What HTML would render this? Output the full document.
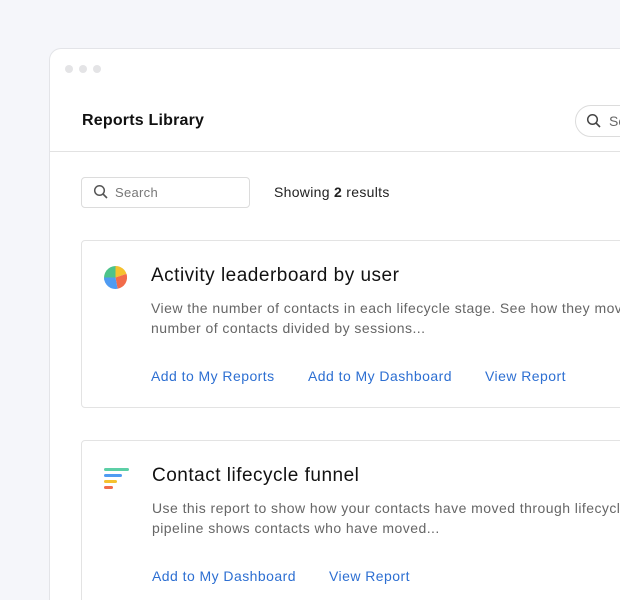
<!DOCTYPE html>
<html style="overflow:hidden;width:620px;height:600px"><head><style>
body{margin:0;width:620px;height:600px;background:#f5f6fa;overflow:hidden;font-family:"Liberation Sans",sans-serif;position:relative}
.win{position:absolute;left:49px;top:48px;width:571px;height:552px;background:#fff;border:1px solid #e3e4e8;border-right:none;border-bottom:none;border-radius:12px 0 0 0;overflow:hidden}
.dot{position:absolute;top:16px;width:8px;height:8px;border-radius:50%;background:#e4e4e6}
.title{position:absolute;left:32px;top:63px;font-size:16px;font-weight:bold;color:#111;letter-spacing:0.2px}
.hsearch{position:absolute;left:525px;top:56px;width:80px;height:30px;border:1px solid #dcdcdc;border-radius:16px}
.div{position:absolute;left:0;right:0;top:102px;border-top:1px solid #e2e2e2}
.search{position:absolute;left:31px;top:128px;width:167px;height:29px;border:1px solid #dcdcdc;border-radius:4px;font-size:13px;color:#777;letter-spacing:0.3px}
.show{position:absolute;left:224px;top:135px;font-size:14px;color:#222;letter-spacing:0.3px}
.card{position:absolute;left:31px;width:600px;border:1px solid #e3e3e3;border-radius:4px;background:#fff}
.ct{position:absolute;left:69px;font-size:19px;color:#111;letter-spacing:0.5px}
.cd{position:absolute;left:69px;font-size:14px;color:#666;line-height:20px;white-space:nowrap;letter-spacing:0.45px}
.lk{position:absolute;font-size:14px;color:#2d6fd2;letter-spacing:0.45px}
</style></head><body>
<div class="win">
<div class="dot" style="left:15px"></div><div class="dot" style="left:29px"></div><div class="dot" style="left:43px"></div>
<div class="title">Reports Library</div>
<div class="hsearch"><svg style="position:absolute;left:10px;top:7px" width="16" height="16" viewBox="0 0 16 16"><circle cx="6.5" cy="6.5" r="4.8" fill="none" stroke="#444" stroke-width="1.5"/><path d="M10 10l4 4" stroke="#444" stroke-width="1.6"/></svg><span style="position:absolute;left:33px;top:7px;font-size:14px;color:#666">Se</span></div>
<div class="div"></div>
<div class="search"><svg style="position:absolute;left:11px;top:6px" width="16" height="16" viewBox="0 0 16 16"><circle cx="6.5" cy="6.5" r="4.8" fill="none" stroke="#555" stroke-width="1.5"/><path d="M10 10l4 4" stroke="#555" stroke-width="1.6"/></svg><span style="position:absolute;left:33px;top:7px">Search</span></div>
<div class="show">Showing <b>2</b> results</div>
<div class="card" style="top:191px;height:166px">
<svg style="position:absolute;left:22px;top:25px" width="23" height="23" viewBox="0 0 22 22"><path d="M11 11V0A11 11 0 0 1 21.5 7.5Z" fill="#f5c12e"/><path d="M11 11L21.5 7.5A11 11 0 0 1 13 21.8Z" fill="#f26b4a"/><path d="M11 11L0.5 14A11 11 0 0 1 11 0Z" fill="#4cc38a"/><path d="M11 11L13 21.8A11 11 0 0 1 0 11Z" fill="#4f9bf2"/></svg>
<div class="ct" style="top:24px">Activity leaderboard by user</div>
<div class="cd" style="top:57px">View the number of contacts in each lifecycle stage. See how they move<br>number of contacts divided by sessions...</div>
<div class="lk" style="left:69px;top:127px">Add to My Reports</div>
<div class="lk" style="left:226px;top:127px">Add to My Dashboard</div>
<div class="lk" style="left:403px;top:127px">View Report</div>
</div>
<div class="card" style="top:391px;height:220px">
<svg style="position:absolute;left:22px;top:27px" width="26" height="24" viewBox="0 0 26 24"><rect x="0" y="0" width="25" height="3" rx="1.5" fill="#5ccfa6"/><rect x="0" y="6" width="18" height="3" rx="1.5" fill="#4f9bf2"/><rect x="0" y="12" width="13" height="3" rx="1.5" fill="#f5c12e"/><rect x="0" y="18" width="9" height="3" rx="1.5" fill="#f26b4a"/></svg>
<div class="ct" style="top:24px;left:70px">Contact lifecycle funnel</div>
<div class="cd" style="top:57px;left:70px">Use this report to show how your contacts have moved through lifecycle<br>pipeline shows contacts who have moved...</div>
<div class="lk" style="left:70px;top:127px">Add to My Dashboard</div>
<div class="lk" style="left:247px;top:127px">View Report</div>
</div>
</div>
</body></html>
